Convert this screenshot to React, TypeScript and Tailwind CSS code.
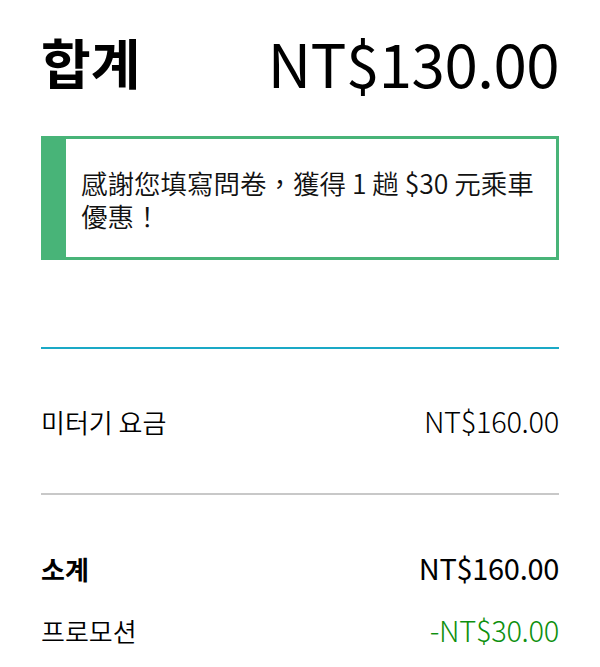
const font = {
  fontFamily: '"Noto Sans CJK KR", "Noto Sans CJK TC", sans-serif',
};

function Row({
  label,
  value,
  bold,
  valueClass,
}: {
  label: string;
  value: string;
  bold?: boolean;
  valueClass?: string;
}) {
  return (
    <div className="flex h-[40px] items-center justify-between">
      <span className={bold ? "text-[26px] font-bold" : "text-[26px] font-[350]"}>{label}</span>
      <span
        className={
          (bold ? "font-normal " : "font-light ") +
          "text-[29px] tracking-[-0.3px] " +
          (valueClass ?? "text-black")
        }
      >
        {value}
      </span>
    </div>
  );
}

export default function App() {
  return (
    <div className="h-[667px] overflow-hidden bg-white px-[41px] text-black" style={font}>
      <div className="mt-[34px] flex h-[56px] items-center justify-between">
        <span className="text-[54px] font-bold leading-none">합계</span>
        <span className="text-[60px] leading-none tracking-[-0.5px]">NT$130.00</span>
      </div>

      <div className="mt-[46px] flex h-[124px] border-[3px] border-l-[25px] border-[#48b478]">
        <p
          className="pl-[15px] pr-[10px] pt-[27px] text-[26.5px] font-[350] leading-[33px] text-[#111]"
          style={{ fontFamily: '"Noto Sans CJK TC", sans-serif' }}
        >
          感謝您填寫問卷，獲得 1 趟 $30 元乘車優惠！
        </p>
      </div>

      <div className="mt-[87px] h-[2px] bg-[#1aa9c6]" />

      <div className="mt-[52px]">
        <Row label="미터기 요금" value="NT$160.00" />
      </div>

      <div className="mt-[52px] h-[2px] bg-[#c8c8c8]" />

      <div className="mt-[53px]">
        <Row label="소계" value="NT$160.00" bold />
      </div>
      <div className="mt-[22px]">
        <Row label="프로모션" value="-NT$30.00" valueClass="text-[#0e900e]" />
      </div>
    </div>
  );
}
